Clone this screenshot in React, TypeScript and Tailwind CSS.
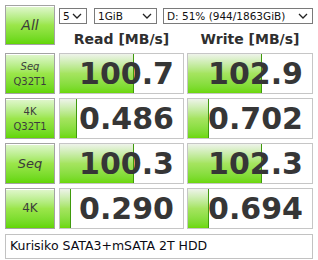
import React from 'react';

type Result = {
  label: React.ReactNode;
  read: string;
  write: string;
  readBar: number;
  writeBar: number;
};

const rows: Result[] = [
  {
    label: (
      <>
        <span className="italic">Seq</span>
        <span>Q32T1</span>
      </>
    ),
    read: '100.7',
    write: '102.9',
    readBar: 74,
    writeBar: 74,
  },
  {
    label: (
      <>
        <span>4K</span>
        <span>Q32T1</span>
      </>
    ),
    read: '0.486',
    write: '0.702',
    readBar: 17,
    writeBar: 21,
  },
  {
    label: <span className="text-[13px] italic">Seq</span>,
    read: '100.3',
    write: '102.3',
    readBar: 74,
    writeBar: 74,
  },
  {
    label: <span className="text-[12px]">4K</span>,
    read: '0.290',
    write: '0.694',
    readBar: 11,
    writeBar: 21,
  },
];

const greenBtn =
  'flex flex-col items-center justify-center border border-[#a3a3a3] bg-gradient-to-b from-[#e2f7cf] via-[#9be64a] to-[#62d600] shadow-[inset_0_1px_0_#ffffff] text-[#3c3c3c] leading-[15px]';

function Chevron() {
  return (
    <svg width="10" height="6" viewBox="0 0 10 6" className="shrink-0">
      <path d="M1 1l4 4 4-4" fill="none" stroke="#222" strokeWidth="1.3" />
    </svg>
  );
}

function Select({ value, className }: { value: string; className: string }) {
  return (
    <div
      className={`flex h-[16px] items-center justify-between border border-[#7a7a7a] bg-white pl-[3px] pr-[4px] text-[10.5px] text-[#111] ${className}`}
    >
      <span className="leading-none">{value}</span>
      <Chevron />
    </div>
  );
}

function Cell({ value, bar, width }: { value: string; bar: number; width: string }) {
  return (
    <div className={`relative h-[41px] ${width} border border-[#c6c6c6] bg-white overflow-hidden`}>
      <div
        className="absolute left-0 top-0 bottom-0 border-r border-[#3f9a0c] bg-gradient-to-b from-[#eef3ea] via-[#a5e45f] to-[#6cd806]"
        style={{ width: bar }}
      />
      <div className="relative flex h-full items-center justify-end pr-[9px] text-[30px] font-bold leading-none text-[#363636]">
        {value}
      </div>
    </div>
  );
}

export default function App() {
  return (
    <div
      className="h-[260px] w-[318px] bg-white pl-[5px] pt-[5px]"
      style={{ fontFamily: '"DejaVu Sans", Verdana, sans-serif' }}
    >
      {/* top controls */}
      <div className="flex">
        <div className={`${greenBtn} h-[40px] w-[50px] text-[14px] italic`}>All</div>
        <div className="ml-[4px] flex w-[254px] flex-col">
          <div className="mt-[3px] flex">
            <Select value="5" className="w-[28px]" />
            <Select value="1GiB" className="ml-[7px] w-[63px]" />
            <Select value="D: 51% (944/1863GiB)" className="ml-[6px] w-[150px]" />
          </div>
          <div className="mt-[5px] flex text-[14px] font-bold text-[#2f2f2f]">
            <div className="w-[125px] text-center">Read [MB/s]</div>
            <div className="ml-[3px] w-[126px] text-center">Write [MB/s]</div>
          </div>
        </div>
      </div>

      {/* results */}
      <div className="mt-[3px] flex flex-col gap-[4px]">
        {rows.map((r, i) => (
          <div key={i} className="flex">
            <div className={`${greenBtn} h-[41px] w-[50px] text-[10px]`}>{r.label}</div>
            <div className="ml-[4px]">
              <Cell value={r.read} bar={r.readBar} width="w-[125px]" />
            </div>
            <div className="ml-[3px]">
              <Cell value={r.write} bar={r.writeBar} width="w-[126px]" />
            </div>
          </div>
        ))}
      </div>

      {/* comment */}
      <div className="mt-[5px] flex h-[25px] w-[308px] items-center border border-[#c2c2c2] bg-white pl-[4px] text-[12.5px] text-[#0a0a14]">
        Kurisiko SATA3+mSATA 2T HDD
      </div>
    </div>
  );
}
